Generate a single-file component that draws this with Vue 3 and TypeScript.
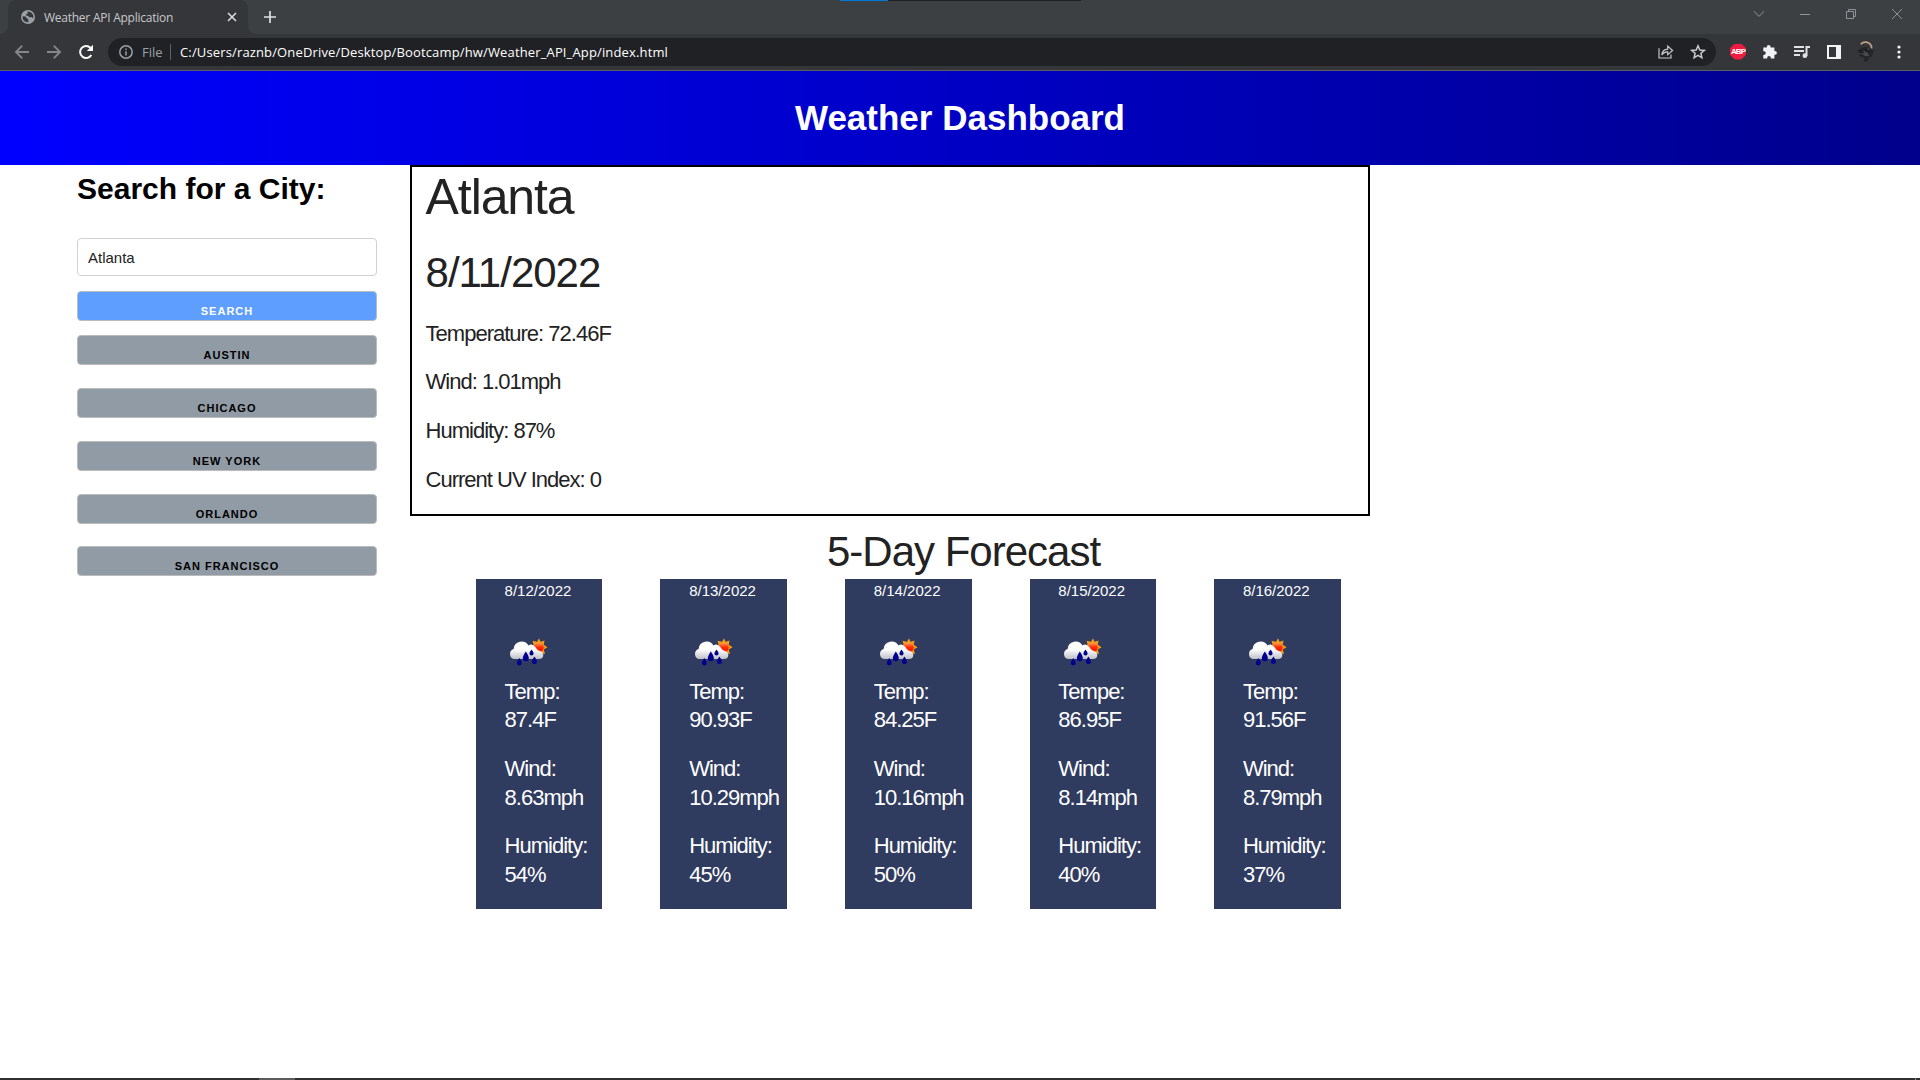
<script setup lang="ts">
interface ForecastDay {
  date: string
  tempLabel: string
  temp: string
  wind: string
  humidity: string
}

const cities: string[] = ['Austin', 'Chicago', 'New York', 'Orlando', 'San Francisco']

const days: ForecastDay[] = [
  { date: '8/12/2022', tempLabel: 'Temp:', temp: '87.4F', wind: '8.63mph', humidity: '54%' },
  { date: '8/13/2022', tempLabel: 'Temp:', temp: '90.93F', wind: '10.29mph', humidity: '45%' },
  { date: '8/14/2022', tempLabel: 'Temp:', temp: '84.25F', wind: '10.16mph', humidity: '50%' },
  { date: '8/15/2022', tempLabel: 'Tempe:', temp: '86.95F', wind: '8.14mph', humidity: '40%' },
  { date: '8/16/2022', tempLabel: 'Temp:', temp: '91.56F', wind: '8.79mph', humidity: '37%' },
]
</script>

<template>
  <div class="window">
    <div class="tabstrip">
      <div class="top-progress"><span></span></div>
      <div class="tab">
        <svg class="globe" width="14" height="14" viewBox="0 0 14 14">
          <circle cx="7" cy="7" r="7" fill="#9aa0a6" />
          <path d="M1.5 6.2 L4.3 6.5 Q6 7.3 5.7 8.6 L7.3 9.1 V12.2 Q3.5 12.3 1.9 9.2 Z M6.2 1.6 Q10 1.3 11.9 4.4 Q12.7 6.4 12.2 8.2 L10.2 6.9 L8 7.3 L7.4 5.9 L5 5.5 L5.2 3.9 L7.1 3.3 Z" fill="#35363a" />
        </svg>
        <span class="tab-title">Weather API Application</span>
        <svg class="tab-close" width="10" height="10" viewBox="0 0 10 10">
          <path d="M1 1 L9 9 M9 1 L1 9" stroke="#dfe1e5" stroke-width="1.5" />
        </svg>
      </div>
      <svg class="plus" width="12" height="12" viewBox="0 0 12 12">
        <path d="M6 0 V12 M0 6 H12" stroke="#dfe1e5" stroke-width="1.7" />
      </svg>
      <div class="controls">
        <svg width="12" height="12" viewBox="0 0 12 12"><path d="M1 3.2 L6 8.4 L11 3.2" fill="none" stroke="#8f9296" /></svg>
        <svg width="12" height="12" viewBox="0 0 12 12"><path d="M1 6.5 H11" stroke="#8f9296" /></svg>
        <svg width="12" height="12" viewBox="0 0 12 12"><path d="M1.5 3.5 H8.5 V10.5 H1.5 Z M3.5 3.5 V1.5 H10.5 V8.5 H8.5" fill="none" stroke="#8f9296" /></svg>
        <svg width="12" height="12" viewBox="0 0 12 12"><path d="M1 1 L11 11 M11 1 L1 11" stroke="#8f9296" /></svg>
      </div>
    </div>

    <div class="toolbar">
      <div class="nav">
        <svg width="16" height="16" viewBox="0 0 16 16"><path d="M15 8 H2.2 M8.3 1.6 L1.9 8 L8.3 14.4" fill="none" stroke="#85868a" stroke-width="1.8" /></svg>
        <svg width="16" height="16" viewBox="0 0 16 16"><path d="M1 8 H13.8 M7.7 1.6 L14.1 8 L7.7 14.4" fill="none" stroke="#85868a" stroke-width="1.8" /></svg>
        <svg width="16" height="16" viewBox="0 0 16 16">
          <path d="M13.3 11 A6 6 0 1 1 12.4 3.8" fill="none" stroke="#fff" stroke-width="2" />
          <path d="M15 0.8 V7 H8.8 Z" fill="#fff" />
        </svg>
      </div>
      <div class="omnibox">
        <svg class="info" width="14" height="14" viewBox="0 0 14 14">
          <circle cx="7" cy="7" r="6.2" fill="none" stroke="#9aa0a6" stroke-width="1.5" />
          <path d="M7 6.2 V10.4 M7 3.5 V5" stroke="#9aa0a6" stroke-width="1.5" />
        </svg>
        <span class="scheme">File</span>
        <span class="divider"></span>
        <span class="url">C:/Users/raznb/OneDrive/Desktop/Bootcamp/hw/Weather_API_App/index.html</span>
        <svg class="share" width="16" height="16" viewBox="0 0 16 16">
          <path d="M1 4.2 V14 H13 V10.5 M3.8 11 Q4.3 5.7 9.7 5.2 V2 L14.6 6.5 L9.7 10.8 V7.9 Q6 7.7 3.8 11 Z" fill="none" stroke="#c3c5c8" stroke-width="1.2" />
        </svg>
        <svg class="star" width="16" height="16" viewBox="0 0 16 16">
          <path d="M8 1.8 L9.8 6 L14.3 6.4 L10.9 9.3 L11.9 13.8 L8 11.4 L4.1 13.8 L5.1 9.3 L1.7 6.4 L6.2 6 Z" fill="none" stroke="#c9cbce" stroke-width="1.5" />
        </svg>
      </div>
      <div class="extensions">
        <div class="adblock">ABP</div>
        <svg class="puzzle" width="16" height="16" viewBox="0 0 16 16">
          <path d="M1.3 3.6 H4.8 V2.9 A1.9 1.9 0 0 1 8.6 2.9 V3.6 H12.4 V7.1 H13.1 A1.8 1.8 0 0 1 13.1 10.7 H12.4 V14.5 H8.8 V13.8 A1.8 1.8 0 0 0 5.2 13.8 V14.5 H1.3 V10.9 H2 A1.8 1.8 0 0 0 2 7.3 H1.3 Z" fill="#f1f3f4" />
        </svg>
        <svg class="queue" width="16" height="16" viewBox="0 0 16 16">
          <path d="M0 3 H10 M0 7 H10 M0 11 H6 M12.5 12 V3 H16" fill="none" stroke="#dfe1e5" stroke-width="2" />
          <circle cx="10.9" cy="11.7" r="2.4" fill="#dfe1e5" />
        </svg>
        <svg class="panel" width="14" height="14" viewBox="0 0 14 14">
          <path d="M0 0 H14 V14 H0 Z M2 2 V12 H9 V2 Z" fill="#f1f3f4" fill-rule="evenodd" />
        </svg>
        <svg class="avatar" width="20" height="22" viewBox="0 0 20 22">
          <path d="M1 10 L4 7.5 L10 6 L15 7 L18 10 L16 15 L13 17 L12 20 L8 21 L8 17 L3 15 L5 12.5 Z" fill="#242629" />
          <path d="M4 12 L8 10 L12 12 L13 15 L9 15 Z M11 7 L14 8 L12 10 Z" fill="#484a4c" />
          <path d="M5 3.4 Q6 1 10 1.2 Q15.5 2 15.6 7.4" fill="none" stroke="#bd9f86" stroke-width="1.7" />
          <path d="M3 10.5 L8 12 M9 8 L14 11" stroke="#111316" />
        </svg>
        <svg class="menu" width="4" height="14" viewBox="0 0 4 14" fill="#f1f3f4">
          <circle cx="2" cy="2" r="1.6" /><circle cx="2" cy="7" r="1.6" /><circle cx="2" cy="12" r="1.6" />
        </svg>
      </div>
    </div>

    <div class="page">
      <header class="hero"><h1>Weather Dashboard</h1></header>
      <div class="content">
        <aside class="sidebar">
          <h2>Search for a City:</h2>
          <input type="text" value="Atlanta" />
          <button class="btn search">Search</button>
          <button v-for="city in cities" :key="city" class="btn city">{{ city }}</button>
        </aside>
        <main class="main">
          <section class="current">
            <h1>Atlanta</h1>
            <h2>8/11/2022</h2>
            <p>Temperature: 72.46F</p>
            <p>Wind: 1.01mph</p>
            <p>Humidity: 87%</p>
            <p>Current UV Index: 0</p>
          </section>
          <h2 class="forecast-title">5-Day Forecast</h2>
          <section class="forecast">
            <article v-for="day in days" :key="day.date" class="card">
              <div class="date">{{ day.date }}</div>
              <svg class="weather" width="50" height="50" viewBox="0 0 50 50">
                <defs>
                  <linearGradient id="cloud" x1="0" y1="0" x2="0" y2="1">
                    <stop offset="0.45" stop-color="#fff" />
                    <stop offset="1" stop-color="#bfc0c8" />
                  </linearGradient>
                  <linearGradient id="sun" x1="0" y1="0" x2="0" y2="1">
                    <stop offset="0" stop-color="#ffa860" />
                    <stop offset="0.5" stop-color="#ff2a00" />
                    <stop offset="1" stop-color="#ff1000" />
                  </linearGradient>
                </defs>
                <path d="M35 11.2 L36.6 14.8 L40.5 13.6 L39.8 17.8 L43.6 20.3 L39.8 22.4 L41 27 L36.6 26 L30 24 L29.5 17.5 L28.6 13.8 L33 14.8 Z" fill="#f59a16" />
                <circle cx="34.7" cy="20.4" r="5" fill="url(#sun)" />
                <path d="M10 32 A5.2 5.2 0 0 1 9.6 22 A8 8 0 0 1 24.5 18.6 Q28 15.6 31.8 20.5 Q32.3 22.5 35 23.7 Q38.8 24.2 39.3 28 Q39.2 32 35 32 Z" fill="url(#cloud)" />
                <path d="M21.8 24.5 Q25 29 24.8 31.2 A3 3 0 0 1 18.8 31.2 Q18.8 29 21.8 24.5 Z M27.5 22.5 Q29.7 25.2 29.6 26.5 A2.1 2.1 0 0 1 25.4 26.5 Q25.4 25.2 27.5 22.5 Z M15.3 31 Q17.9 34.4 17.8 36 A2.5 2.5 0 0 1 12.8 36 Q12.8 34.4 15.3 31 Z M30.4 29.4 Q33 32.8 32.9 34.5 A2.5 2.5 0 0 1 27.9 34.5 Q27.9 32.8 30.4 29.4 Z" fill="#00008f" />
              </svg>
              <p>{{ day.tempLabel }}<br />{{ day.temp }}</p>
              <p>Wind:<br />{{ day.wind }}</p>
              <p>Humidity:<br />{{ day.humidity }}</p>
            </article>
          </section>
        </main>
      </div>
    </div>
    <div class="taskbar"><span class="active-app"></span><span class="show-desktop"></span></div>
  </div>
</template>

<style>
body {
  margin: 0;
  overflow: hidden;
}
</style>

<style scoped>
* {
  box-sizing: border-box;
}
svg {
  display: block;
  flex: none;
}
h1, h2, p {
  margin: 0;
  font-weight: 400;
}
.window {
  width: 1920px;
  height: 1080px;
  display: flex;
  flex-direction: column;
  overflow: hidden;
  background: #fff;
  color: #222;
  font-family: "Liberation Sans", Arial, sans-serif;
}
.tabstrip {
  position: relative;
  height: 34px;
  flex: none;
  display: flex;
  padding-left: 8px;
  background: #3c4043;
  font-family: "Open Sans", "Noto Sans", sans-serif;
}
.top-progress {
  position: absolute;
  left: 840px;
  top: 0;
  width: 241px;
  height: 1px;
  background: #202124;
}
.top-progress span {
  display: block;
  width: 48px;
  height: 1px;
  background: #0078d7;
}
.tab {
  position: relative;
  width: 240px;
  height: 34px;
  display: flex;
  align-items: center;
  padding: 0 11px 0 13px;
  border-radius: 8px 8px 0 0;
  background: #35363a;
}
.tab::before,
.tab::after {
  content: "";
  position: absolute;
  bottom: 0;
  width: 8px;
  height: 8px;
}
.tab::before {
  left: -8px;
  background: radial-gradient(circle at 0 0, transparent 7.5px, #35363a 8px);
}
.tab::after {
  right: -8px;
  background: radial-gradient(circle at 100% 0, transparent 7.5px, #35363a 8px);
}
.tab-title {
  margin-left: 9px;
  font-size: 12px;
  letter-spacing: -0.25px;
  white-space: nowrap;
  color: #c6c8cb;
}
.tab-close {
  margin-left: auto;
}
.plus {
  margin: 11px 0 0 16px;
}
.controls {
  margin: 8px 17px 0 auto;
  display: flex;
  gap: 34px;
}
.toolbar {
  height: 37px;
  flex: none;
  display: flex;
  align-items: center;
  padding: 0 19px 1px 14px;
  border-bottom: 1px solid #5c5d60;
  background: #35363a;
  font-family: "Open Sans", "Noto Sans", sans-serif;
}
.nav {
  width: 94px;
  display: flex;
  gap: 16px;
}
.omnibox {
  width: 1608px;
  height: 28px;
  display: flex;
  align-items: center;
  padding: 0 10px 0 11px;
  border-radius: 14px;
  background: #202124;
  font-size: 13px;
  white-space: nowrap;
}
.scheme {
  width: 28px;
  margin-left: 9px;
  color: #9aa0a6;
}
.divider {
  width: 1px;
  height: 16px;
  background: #5f6368;
}
.url {
  margin-left: 9px;
  color: #fff;
  letter-spacing: 0.145px;
}
.share {
  margin-left: auto;
}
.star {
  margin-left: 16px;
}
.extensions {
  margin-left: auto;
  display: flex;
  align-items: center;
}
.adblock {
  width: 16px;
  height: 16px;
  display: flex;
  align-items: center;
  justify-content: center;
  background: #ee1c40;
  clip-path: polygon(30% 0, 70% 0, 100% 30%, 100% 70%, 70% 100%, 30% 100%, 0 70%, 0 30%);
  color: #fff;
  font: bold 8px/16px "Liberation Sans", Arial, sans-serif;
  letter-spacing: -0.9px;
}
.puzzle,
.queue {
  margin-left: 16px;
}
.panel {
  margin-left: 17px;
}
.avatar {
  margin-left: 15px;
}
.menu {
  margin-left: 21px;
}
.page {
  flex: 1;
}
.hero {
  height: 94px;
  display: flex;
  align-items: center;
  justify-content: center;
  background: linear-gradient(to right, #0000ff, #00008b);
  color: #fff;
}
.hero h1 {
  font-size: 35px;
  font-weight: 700;
}
.content {
  display: flex;
  align-items: flex-start;
}
.sidebar {
  width: 300px;
  margin-left: 77px;
  display: flex;
  flex-direction: column;
}
.sidebar h2 {
  height: 73px;
  line-height: 48px;
  font-size: 30px;
  font-weight: 700;
  color: #000;
}
input {
  width: 300px;
  height: 38px;
  margin-bottom: 15px;
  padding: 6px 10px;
  border: 1px solid #d1d1d1;
  border-radius: 4px;
  background: #fff;
  color: #222;
  font: 15px "Liberation Sans", Arial, sans-serif;
}
.btn {
  width: 300px;
  height: 30px;
  padding: 0;
  border: 1px solid #bbb;
  border-radius: 4px;
  font: 600 11px/38px "Liberation Sans", Arial, sans-serif;
  letter-spacing: 1px;
  text-transform: uppercase;
  text-align: center;
}
.search {
  margin-bottom: 14px;
  background: #5e9eff;
  color: #fff;
}
.city {
  margin-bottom: 23px;
  background: #919ba5;
  color: #000;
}
.city:nth-last-child(2) {
  margin-bottom: 22px;
}
.main {
  width: 960px;
  margin-left: 33px;
}
.current {
  height: 351px;
  padding-left: 13.6px;
  border: 2px solid #000;
}
.current h1 {
  margin-bottom: 20px;
  font-size: 50px;
  line-height: 60px;
  letter-spacing: -1.1px;
}
.current h2 {
  margin-bottom: 20.3px;
  font-size: 42px;
  line-height: 52.5px;
  letter-spacing: -1px;
}
p {
  margin-bottom: 20px;
  font-size: 22px;
  line-height: 28.6px;
  letter-spacing: -1px;
  white-space: nowrap;
}
.forecast-title {
  height: 63px;
  padding: 10px 0 0 417px;
  font-size: 42px;
  line-height: 52.5px;
  letter-spacing: -1px;
}
.forecast {
  display: flex;
  gap: 57.96px;
  padding-left: 65.8px;
}
.card {
  width: 126.64px;
  height: 330px;
  flex: none;
  padding-left: 28.8px;
  background: #2f3b5f;
  color: #fff;
}
.date {
  height: 48px;
  font-size: 15px;
  line-height: 24px;
}
.weather {
  margin: 0 0 0.75px -0.2px;
}
.taskbar {
  height: 2px;
  flex: none;
  display: flex;
  justify-content: space-between;
  padding: 0 4px 0 259px;
  background: #322f30;
}
.active-app {
  width: 36px;
  background: #5c5a5b;
}
.show-desktop {
  width: 1px;
  background: #8a8889;
}
</style>
